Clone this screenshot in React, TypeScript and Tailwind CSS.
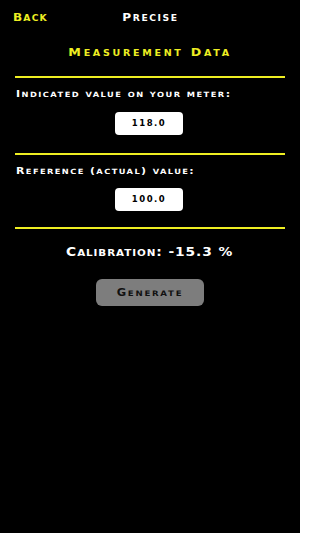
import React from "react";

const font = { fontFamily: '"DejaVu Sans", sans-serif' };

function SC({ t, small }: { t: string; small: string }) {
  const parts = t.split(/([a-z]+)/);
  return (
    <>
      {parts.map((p, i) =>
        /^[a-z]+$/.test(p) ? (
          <span key={i} className={small + " uppercase"}>
            {p}
          </span>
        ) : (
          <React.Fragment key={i}>{p}</React.Fragment>
        )
      )}
    </>
  );
}

export default function App() {
  return (
    <div className="w-[300px] min-h-[533px] bg-black flex flex-col font-bold leading-none" style={font}>
      <div className="grid grid-cols-3 h-[34px] items-center">
        <div className="pl-[13px] flex items-center">
          <span className="inline-block origin-left scale-x-[1.15] text-[10.5px] tracking-[1px] text-[#eeee22]">
            <SC t="Back" small="text-[8px]" />
          </span>
        </div>
        <div className="flex items-center justify-center">
          <span className="inline-block scale-x-[1.15] text-[10.5px] tracking-[1.35px] text-white">
            <SC t="Precise" small="text-[8px]" />
          </span>
        </div>
        <div />
      </div>
      <div className="h-[36px] flex items-center justify-center">
        <span className="inline-block scale-x-[1.15] text-[11px] tracking-[2.35px] text-[#eeee22]">
          <SC t="Measurement Data" small="text-[8.3px]" />
        </span>
      </div>
      <div className="mt-[6px] mx-[15px] h-[2px] bg-[#eeee22]" />
      <div className="h-[32px] flex items-center pl-[16px]">
        <span className="inline-block origin-left scale-x-[1.15] text-[9.5px] tracking-[1.28px] text-white">
          <SC t="Indicated value on your meter:" small="text-[7.2px]" />
        </span>
      </div>
      <div className="mt-[2px] flex justify-center">
        <div className="w-[68px] h-[23px] ml-[-2px] rounded-[4px] bg-white flex items-center justify-center text-[8.5px] tracking-[1.5px] text-black">
          118.0
        </div>
      </div>
      <div className="mt-[18px] mx-[15px] h-[2px] bg-[#eeee22]" />
      <div className="h-[32px] flex items-center pl-[16px]">
        <span className="inline-block origin-left scale-x-[1.15] text-[9.5px] tracking-[1.23px] text-white">
          <SC t="Reference (actual) value:" small="text-[7.2px]" />
        </span>
      </div>
      <div className="mt-[1px] flex justify-center">
        <div className="w-[68px] h-[23px] ml-[-2px] rounded-[4px] bg-white flex items-center justify-center text-[8.5px] tracking-[1.5px] text-black">
          100.0
        </div>
      </div>
      <div className="mt-[16px] mx-[15px] h-[2px] bg-[#eeee22]" />
      <div className="h-[45px] flex items-center justify-center">
        <span className="inline-block scale-x-[1.15] text-[12px] tracking-[0.8px] text-white">
          <SC t="Calibration: -15.3 %" small="text-[9px]" />
        </span>
      </div>
      <div className="mt-[5px] flex justify-center">
        <div className="w-[108px] h-[27px] rounded-[6px] bg-[#7d7d7d] flex items-center justify-center">
          <span className="inline-block scale-x-[1.15] text-[10px] tracking-[1.5px] text-[#111111]">
            <SC t="Generate" small="text-[7.5px]" />
          </span>
        </div>
      </div>
    </div>
  );
}
